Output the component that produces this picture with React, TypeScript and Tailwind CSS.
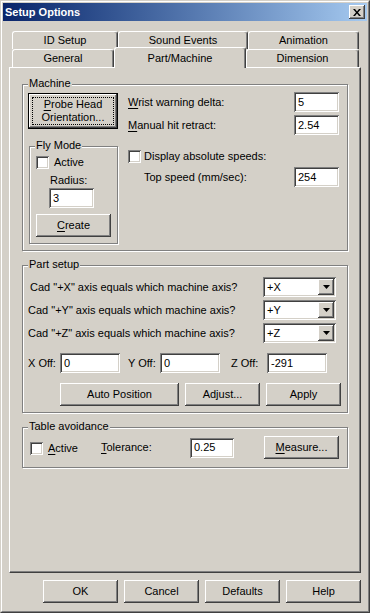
import React from 'react';

// classic 3D edges
const raised = 'shadow-[inset_-1px_-1px_0_#404040,inset_1px_1px_0_#ffffff,inset_-2px_-2px_0_#808080]';
const sunken = 'shadow-[inset_1px_1px_0_#808080,inset_-1px_-1px_0_#ffffff,inset_2px_2px_0_#404040,inset_-2px_-2px_0_#d4d0c8]';

const Btn = ({ w, children }: { w: string; children: React.ReactNode }) => (
  <div className={`${w} h-[23px] ${raised} bg-[#d4d0c8] flex items-center justify-center shrink-0`}>{children}</div>
);

const Field = ({ w, value }: { w: string; value: string }) => (
  <div className={`${w} h-[20px] ${sunken} bg-white flex items-center pl-[4px] shrink-0`}>{value}</div>
);

const Check = () => <div className={`w-[13px] h-[13px] ${sunken} bg-white shrink-0`} />;

const Combo = ({ value }: { value: string }) => (
  <div className={`w-[73px] h-[20px] ${sunken} bg-white flex items-center p-[2px] shrink-0`}>
    <span className="flex-1 pl-[2px]">{value}</span>
    <div className={`w-[16px] h-[16px] ${raised} bg-[#d4d0c8] flex items-center justify-center`}>
      <svg width="7" height="4" viewBox="0 0 7 4">
        <path d="M0 0h7L3.5 4z" fill="#000" />
      </svg>
    </div>
  </div>
);

const Group = ({ label, className, children }: { label: string; className: string; children?: React.ReactNode }) => (
  <div className={`relative border border-[#808080] shadow-[inset_1px_1px_0_#ffffff,1px_1px_0_#ffffff] ${className}`}>
    <span className="absolute left-[5px] top-[-8px] px-[1px] bg-[#d4d0c8] leading-[13px] whitespace-nowrap">{label}</span>
    {children}
  </div>
);

const Tab = ({ w, label, selected }: { w: string; label: string; selected?: boolean }) => (
  <div
    className={`${w} ${selected ? 'relative z-10 -mt-[2px] h-[21px]' : 'h-[18px]'} bg-[#d4d0c8] border-t border-l border-r border-t-white border-l-white border-r-[#404040] rounded-t-[3px] shadow-[inset_-1px_0_0_#808080] flex items-center justify-center shrink-0`}
  >
    {label}
  </div>
);

const U = ({ children }: { children: React.ReactNode }) => <span className="underline underline-offset-[2px]">{children}</span>;

export default function App() {
  return (
    <div className="w-[370px] h-[613px] bg-[#d4d0c8] font-['Liberation_Sans',Arial,sans-serif] text-[11px] leading-[13px] text-black border border-t-[#d4d0c8] border-l-[#d4d0c8] border-r-[#404040] border-b-[#404040] overflow-hidden">
      <div className="h-full border border-t-white border-l-white border-r-[#808080] border-b-[#808080] p-[1px] flex flex-col">
        {/* title bar */}
        <div className="h-[18px] shrink-0 flex items-center justify-between pl-[2px] pr-[2px] bg-linear-to-r from-[#0a246a] to-[#a6caf0]">
          <span className="text-white font-bold text-[11px]">Setup Options</span>
          <div className={`w-[16px] h-[14px] ${raised} bg-[#d4d0c8] flex items-center justify-center`}>
            <svg width="8" height="7" viewBox="0 0 8 7">
              <path d="M0 0h2l2 2.4L6 0h2L5 3.5 8 7H6L4 4.6 2 7H0l3-3.5z" fill="#000" />
            </svg>
          </div>
        </div>

        <div className="flex-1 flex flex-col px-[6px] pt-[10px]">
          {/* tabs */}
          <div className="h-[36px] flex flex-col shrink-0">
            <div className="flex pl-[3px]">
              <Tab w="w-[106px]" label="ID Setup" />
              <Tab w="w-[130px]" label="Sound Events" />
              <Tab w="w-[111px]" label="Animation" />
            </div>
            <div className="flex pl-[3px]">
              <Tab w="w-[102px]" label="General" />
              <Tab w="w-[132px]" label="Part/Machine" selected />
              <Tab w="w-[113px]" label="Dimension" />
            </div>
          </div>

          {/* panel */}
          <div className="h-[506px] shrink-0 border border-t-white border-l-white border-r-[#404040] border-b-[#404040] shadow-[inset_-1px_-1px_0_#808080] pl-[12px] pt-[16px] flex flex-col">
            <Group label="Machine" className="w-[326px] h-[167px] flex pl-[5px] pt-[8px]">
              <div className="w-[90px] flex flex-col">
                <div className="w-[90px] h-[36px] border border-black flex">
                  <div className={`flex-1 ${raised} p-[3px] flex`}>
                    <div className="flex-1 border border-dotted border-black flex flex-col items-center justify-center">
                      <span><U>P</U>robe Head</span>
                      <span>Orientation...</span>
                    </div>
                  </div>
                </div>
                <Group label="Fly Mode" className="ml-[1px] mt-[17px] w-[89px] h-[98px] flex flex-col pl-[6px] pt-[9px]">
                  <div className="flex items-center gap-[5px] h-[13px]">
                    <Check />
                    <span>Active</span>
                  </div>
                  <span className="ml-[14px] mt-[5px]">Radius:</span>
                  <div className="ml-[13px] mt-[1px]">
                    <Field w="w-[45px]" value="3" />
                  </div>
                  <div className="mt-[6px]">
                    <Btn w="w-[75px]"><span><U>C</U>reate</span></Btn>
                  </div>
                </Group>
              </div>

              <div className="ml-[10px] -mt-[1px] w-[211px] flex flex-col">
                <div className="h-[20px] flex items-center justify-between">
                  <span><U>W</U>rist warning delta:</span>
                  <Field w="w-[45px]" value="5" />
                </div>
                <div className="mt-[3px] h-[20px] flex items-center justify-between">
                  <span><U>M</U>anual hit retract:</span>
                  <Field w="w-[45px]" value="2.54" />
                </div>
                <div className="mt-[15px] h-[13px] flex items-center gap-[3px]">
                  <Check />
                  <span>Display absolute speeds:</span>
                </div>
                <div className="mt-[4px] h-[20px] flex items-center justify-between pl-[16px]">
                  <span>Top speed (mm/sec):</span>
                  <Field w="w-[45px]" value="254" />
                </div>
              </div>
            </Group>

            <Group label="Part setup" className="mt-[14px] w-[326px] h-[148px] flex flex-col pl-[5px] pt-[11px]">
              <div className="w-[308px] h-[20px] flex items-center justify-between">
                <span className="pl-[2px]">Cad "+X" axis equals which machine axis?</span>
                <Combo value="+X" />
              </div>
              <div className="mt-[3px] w-[308px] h-[20px] flex items-center justify-between">
                <span>Cad "+Y" axis equals which machine axis?</span>
                <Combo value="+Y" />
              </div>
              <div className="mt-[3px] w-[308px] h-[20px] flex items-center justify-between">
                <span>Cad "+Z" axis equals which machine axis?</span>
                <Combo value="+Z" />
              </div>
              <div className="mt-[10px] h-[20px] flex items-center">
                <span className="w-[32px] shrink-0">X Off:</span>
                <Field w="w-[60px]" value="0" />
                <span className="ml-[8px] w-[32px] shrink-0">Y Off:</span>
                <Field w="w-[60px]" value="0" />
                <span className="ml-[11px] w-[36px] shrink-0">Z Off:</span>
                <Field w="w-[60px]" value="-291" />
              </div>
              <div className="mt-[10px] ml-[32px] flex gap-[6px]">
                <Btn w="w-[119px]">Auto Position</Btn>
                <Btn w="w-[75px]">Adjust...</Btn>
                <Btn w="w-[75px]">Apply</Btn>
              </div>
            </Group>

            <Group label="Table avoidance" className="mt-[14px] w-[326px] h-[41px] flex items-center pl-[7px]">
              <div className="w-[71px] shrink-0 flex items-center gap-[5px] mt-[2px]">
                <Check />
                <span><U>A</U>ctive</span>
              </div>
              <span className="w-[89px] shrink-0"><U>T</U>olerance:</span>
              <Field w="w-[44px]" value="0.25" />
              <div className="ml-[30px]">
                <Btn w="w-[75px]"><span><U>M</U>easure...</span></Btn>
              </div>
            </Group>
          </div>

          {/* dialog buttons */}
          <div className="mt-[7px] flex justify-end gap-[6px]">
            <Btn w="w-[75px]">OK</Btn>
            <Btn w="w-[75px]">Cancel</Btn>
            <Btn w="w-[75px]">Defaults</Btn>
            <Btn w="w-[75px]">Help</Btn>
          </div>
        </div>
      </div>
    </div>
  );
}
